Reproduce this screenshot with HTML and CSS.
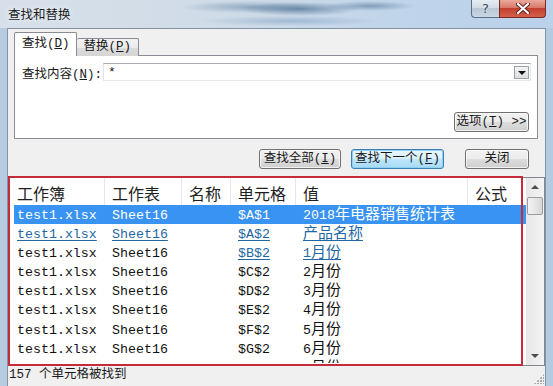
FILE: index.html
```html
<!DOCTYPE html>
<html lang="zh-CN">
<head>
    <meta charset="UTF-8">
    <title>查找和替换</title>
    <link rel="stylesheet" href="styles.css">
</head>
<body>
    <div class="window">
        <div class="titlebar">
            <span class="title">查找和替换</span>
            <div class="caption-btns">
                <span class="cap-help">?</span>
                <span class="cap-close">
                    <svg width="14" height="11" viewBox="0 0 14 11">
                        <path d="M2 1 L12 10 M12 1 L2 10" stroke="#5a1f1a" stroke-width="4" stroke-linecap="round"/>
                        <path d="M2 1 L12 10 M12 1 L2 10" stroke="#fff" stroke-width="2.2" stroke-linecap="round"/>
                    </svg>
                </span>
            </div>
        </div>

        <div class="client">
            <div class="tabs">
                <span class="tab active">查找(<u>D</u>)</span>
                <span class="tab">替换(<u>P</u>)</span>
            </div>
            <div class="tabpanel">
                <div class="find-row">
                    <label>查找内容(<u>N</u>):</label>
                    <div class="combo">
                        <span class="combo-text">*</span>
                        <span class="combo-drop"></span>
                    </div>
                </div>
                <div class="options-row">
                    <button class="btn btn-options">选项(<u>T</u>) &gt;&gt;</button>
                </div>
            </div>

            <div class="actions">
                <button class="btn btn-all">查找全部(<u>I</u>)</button>
                <button class="btn btn-next default">查找下一个(<u>F</u>)</button>
                <button class="btn btn-close">关闭</button>
            </div>

            <div class="results">
                <div class="list">
                    <div class="head">
                        <span>工作簿</span>
                        <span>工作表</span>
                        <span>名称</span>
                        <span>单元格</span>
                        <span>值</span>
                        <span>公式</span>
                    </div>
                    <div class="row selected">
                        <span>test1.xlsx</span><span>Sheet16</span><span></span><span>$A$1</span>
                        <span class="cj"><span class="n">2018</span>年电器销售统计表</span><span></span>
                    </div>
                    <div class="row">
                        <span class="link">test1.xlsx</span><span class="link">Sheet16</span><span></span><span class="link">$A$2</span>
                        <span class="cj link">产品名称</span><span></span>
                    </div>
                    <div class="row">
                        <span>test1.xlsx</span><span>Sheet16</span><span></span><span class="link">$B$2</span>
                        <span class="cj link"><span class="n">1</span>月份</span><span></span>
                    </div>
                    <div class="row">
                        <span>test1.xlsx</span><span>Sheet16</span><span></span><span>$C$2</span>
                        <span class="cj"><span class="n">2</span>月份</span><span></span>
                    </div>
                    <div class="row">
                        <span>test1.xlsx</span><span>Sheet16</span><span></span><span>$D$2</span>
                        <span class="cj"><span class="n">3</span>月份</span><span></span>
                    </div>
                    <div class="row">
                        <span>test1.xlsx</span><span>Sheet16</span><span></span><span>$E$2</span>
                        <span class="cj"><span class="n">4</span>月份</span><span></span>
                    </div>
                    <div class="row">
                        <span>test1.xlsx</span><span>Sheet16</span><span></span><span>$F$2</span>
                        <span class="cj"><span class="n">5</span>月份</span><span></span>
                    </div>
                    <div class="row">
                        <span>test1.xlsx</span><span>Sheet16</span><span></span><span>$G$2</span>
                        <span class="cj"><span class="n">6</span>月份</span><span></span>
                    </div>
                    <div class="row">
                        <span>test1.xlsx</span><span>Sheet16</span><span></span><span>$H$2</span>
                        <span class="cj"><span class="n">7</span>月份</span><span></span>
                    </div>
                </div>
                <div class="scroll">
                    <div class="sb-btn"><span class="arrow up"></span></div>
                    <div class="sb-thumb"></div>
                    <div class="sb-track"></div>
                    <div class="sb-btn"><span class="arrow down"></span></div>
                </div>
                <div class="annot"></div>
            </div>

            <div class="status">
                <span>157 个单元格被找到</span>
                <span class="grip"></span>
            </div>
        </div>
    </div>
</body>
</html>
```

FILE: styles.css
```css
body {
    margin: 0;
    width: 553px;
    height: 386px;
    overflow: hidden;
    font-family: "Liberation Mono", "Noto Sans CJK SC", monospace;
    font-size: 12.5px;
    color: #1a1a1a;
}

.window {
    height: 386px;
    display: flex;
    flex-direction: column;
    background: linear-gradient(to right, #b7cbe0, #c9d9e9 30%, #bfd3e7 70%, #b3cbe2);
}

/* title bar (aero glass, blurred) */
.titlebar {
    height: 28px;
    flex: none;
    display: flex;
    align-items: flex-start;
    background:
        radial-gradient(ellipse 60px 7px at 300px 9px, rgba(40, 80, 120, 0.55), transparent),
        radial-gradient(ellipse 70px 6px at 250px 7px, rgba(60, 100, 140, 0.4), transparent),
        radial-gradient(ellipse 45px 5px at 370px 6px, rgba(50, 90, 130, 0.45), transparent),
        radial-gradient(ellipse 90px 5px at 290px 21px, rgba(90, 130, 170, 0.35), transparent),
        linear-gradient(to right, #d7e0ea, #cfdbe7 40%, #bfd4ea 75%, #b9d1ea);
}

.title {
    margin: 6px 0 0 8px;
    font-family: "Noto Sans CJK SC", sans-serif;
    font-size: 12.5px;
    line-height: 16px;
    color: #1e1e1e;
    text-shadow: 0 0 6px rgba(255, 255, 255, 0.9);
}

.caption-btns {
    margin-left: auto;
    margin-right: 7px;
    display: flex;
}

.cap-help, .cap-close {
    height: 18px;
    display: flex;
    align-items: center;
    justify-content: center;
    box-sizing: border-box;
    border: 1px solid #5d6f84;
    border-top: none;
}

.cap-help {
    width: 28px;
    border-radius: 0 0 0 4px;
    border-right: none;
    background: linear-gradient(#e6ecf3, #d2dce7 45%, #bac8d7 50%, #c9d6e3);
    font-family: "DejaVu Sans", sans-serif;
    font-size: 13px;
    color: #34475c;
    text-shadow: 0 0 2px #fff;
}

.cap-close {
    width: 47px;
    border-radius: 0 0 4px 0;
    border-color: #7a2a22;
    background: linear-gradient(#e9a99c, #d9786a 45%, #c2402f 50%, #d4604c);
}

/* client area */
.client {
    flex: 1;
    margin: 0 7px;
    border: 1px solid #8494a6;
    border-bottom: none;
    background: #f0f0f0;
    display: flex;
    flex-direction: column;
    min-height: 0;
}

.client > * {
    flex-shrink: 0;
}

.tabs {
    display: flex;
    align-items: flex-end;
    margin: 4px 0 0 6px;
    height: 23px;
    position: relative;
    z-index: 1;
}

.tab {
    box-sizing: border-box;
    height: 18px;
    padding: 0 7px;
    border: 1px solid #898c95;
    border-bottom: none;
    border-left: none;
    border-radius: 2px 2px 0 0;
    background: linear-gradient(#f2f2f2, #ebebeb 50%, #dcdcdc 51%, #d5d5d5);
    line-height: 17px;
    white-space: nowrap;
}

.tab.active {
    height: 24px;
    padding: 0 6px 0 7px;
    border-left: 1px solid #898c95;
    background: #fff;
    line-height: 23px;
}

.tabpanel {
    margin: -1px 7px 0 6px;
    height: 84px;
    box-sizing: border-box;
    border: 1px solid #898c95;
    background: #fff;
    padding: 7px 6px 0 7px;
}

.find-row {
    display: flex;
    align-items: center;
    height: 18px;
}

.find-row label {
    width: 81px;
    white-space: nowrap;
}

.combo {
    flex: 1;
    height: 18px;
    box-sizing: border-box;
    border: 1px solid #abadb3;
    border-color: #abadb3 #e3e9ef #e3e9ef #e2e3ea;
    display: flex;
    align-items: center;
}

.combo-text {
    padding-left: 4px;
    font-size: 13px;
}

.combo-drop {
    margin-left: auto;
    margin-right: 1px;
    width: 15px;
    height: 13px;
    box-sizing: border-box;
    border: 1px solid #9aa1aa;
    background: linear-gradient(#f4f4f4, #dedede);
    position: relative;
}

.combo-drop::after {
    content: "";
    position: absolute;
    left: 3px;
    top: 4px;
    border: 4px solid transparent;
    border-top: 4px solid #111;
    border-bottom: none;
}

.options-row {
    display: flex;
    justify-content: flex-end;
    margin-top: 31px;
    padding-right: 2px;
}

/* push buttons */
.btn {
    font: inherit;
    color: #1a1a1a;
    height: 20px;
    padding: 0;
    box-sizing: border-box;
    border: 1px solid #707070;
    border-radius: 3px;
    background: linear-gradient(#f2f2f2, #ebebeb 48%, #dddddd 52%, #cfcfcf);
    box-shadow: inset 0 0 0 1px rgba(255, 255, 255, 0.7);
    line-height: 17px;
    white-space: nowrap;
}

.btn-options { width: 75px; }
.btn-all { width: 82px; }
.btn-next { width: 93px; margin-left: 10px; }
.btn-close { width: 64px; margin-left: 21px; }

.btn.default {
    border-color: #3c7fb1;
    background: linear-gradient(#eaf6fd, #d9f0fc 48%, #bee6fd 52%, #a7d9f5);
    box-shadow: inset 0 0 0 1px #8fd0f5;
}

.actions {
    display: flex;
    justify-content: flex-end;
    margin: 10px 16px 0 0;
}

/* results list */
.results {
    margin-top: 8px;
    height: 189px;
    box-sizing: border-box;
    border: 1px solid #828790;
    background: #fff;
    display: flex;
    position: relative;
}

.list {
    flex: 1;
    overflow: hidden;
    padding-left: 5px;
    margin-bottom: 2px;
}

.head, .row {
    display: grid;
    grid-template-columns: 91px 77px 49px 65px 172px 1fr;
}

.head {
    height: 26.5px;
    font-family: "Noto Sans CJK SC", sans-serif;
    font-size: 16px;
    color: #1e1e1e;
}

.head span {
    box-sizing: border-box;
    padding-top: 4px;
    line-height: 22px;
    border-right: 1px solid #e3e6ea;
}

.head span, .row span {
    padding-left: 7px;
    white-space: nowrap;
}

.head span:first-child, .row > span:first-child {
    padding-left: 3px;
}

.head span:last-child {
    border-right: none;
}

.row {
    height: 19.2px;
    align-items: baseline;
    font-family: "Liberation Mono", monospace;
    font-size: 13.3px;
    line-height: 16px;
    color: #111;
}

.row .cj {
    font-family: "Noto Sans CJK SC", sans-serif;
    font-size: 15px;
    line-height: 15px;
}

.row .cj .n {
    padding: 0;
    font-family: "Liberation Mono", monospace;
    font-size: 13.3px;
    line-height: 1;
}

.row.selected {
    background: #3993f2;
    color: #fff;
}

.link {
    color: #1f68a3;
    text-decoration: underline;
}

.row .link {
    text-decoration-thickness: 1px;
    text-underline-offset: 2px;
}

/* scroll bar */
.scroll {
    width: 18px;
    flex: none;
    display: flex;
    flex-direction: column;
    background: linear-gradient(to right, #e6e6e6, #f4f4f4);
}

.sb-btn {
    height: 18px;
    display: flex;
    align-items: center;
    justify-content: center;
}

.sb-thumb {
    height: 18px;
    margin: 1px 1px 0;
    box-sizing: border-box;
    border: 1px solid #9b9b9b;
    border-radius: 2px;
    background: linear-gradient(to right, #f3f3f3, #e6e6e6 50%, #d6d6d6);
}

.sb-track {
    flex: 1;
}

.arrow {
    border: 3px solid transparent;
    border-left-width: 4px;
    border-right-width: 4px;
}

.arrow.up {
    border-bottom: 4px solid #4d4d4d;
    border-top: none;
}

.arrow.down {
    border-top: 4px solid #4d4d4d;
    border-bottom: none;
}

/* red annotation box drawn over the list */
.annot {
    position: absolute;
    left: -1px;
    top: -2px;
    width: 515px;
    height: 190px;
    box-sizing: border-box;
    border: 2.5px solid #c62b3b;
    pointer-events: none;
}

/* status bar */
.status {
    flex: 1 1 auto;
    min-height: 0;
    display: flex;
    align-items: center;
    padding: 0 0 2px 1px;
    font-size: 12.5px;
    line-height: 14px;
}

.grip {
    margin: auto 1px 0 auto;
    width: 10px;
    height: 10px;
    background: radial-gradient(circle at 1px 1px, #a8a8a8 1px, transparent 1.3px) 0 0 / 3px 3px;
    clip-path: polygon(100% 0, 100% 100%, 0 100%);
}
```
